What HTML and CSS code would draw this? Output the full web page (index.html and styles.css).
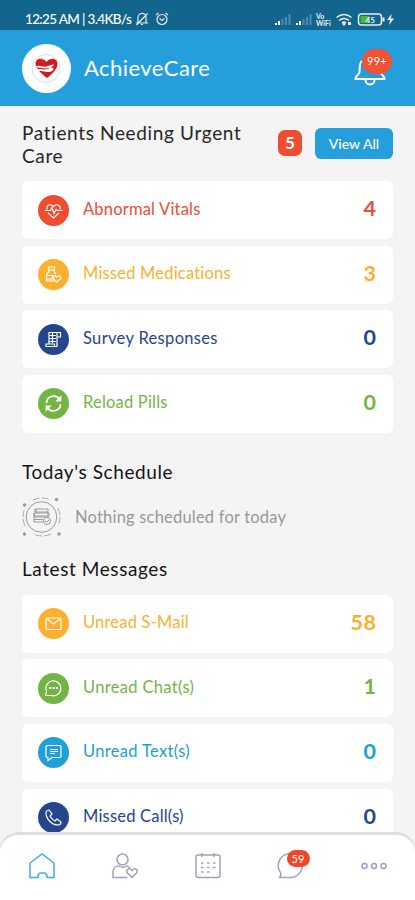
FILE: index.html
```html
<!DOCTYPE html>
<html lang="en">
<head>
<meta charset="utf-8">
<title>AchieveCare</title>
<link rel="stylesheet" href="styles.css">
</head>
<body>
<div class="app">
  <div class="status">
    <span class="clock">12:25 AM | 3.4KB/s</span>
    <svg class="mute" width="14" height="14" viewBox="0 0 14 14"><path d="M3 10V6a4 4 0 0 1 8-1v5l1 1H2zM6 12.5h2M1.5 13L12.5 1.500"/></svg>
    <svg class="alarm" width="14" height="14" viewBox="0 0 14 14"><circle cx="7" cy="7.500" r="5"/><path d="M4.500 6.500L7 8.500l2.500-2M1 3l2.500-2M13 3l-2.500-2"/></svg>
    <svg class="system" width="122" height="18" viewBox="0 0 122 18">
      <g class="bars"><path d="M1 13v2M4 11v4"/><path class="dim" d="M7.500 9v6M11 7v8M14.500 4v11"/><path d="M22 13v2M25 11v4"/><path class="dim" d="M28.500 9v6M32 7v8M35.500 4v11"/></g>
      <text x="41" y="8.500">Vo</text><text x="41" y="15.500">WiFi</text>
      <path class="line" d="M61.500 7.500q7.500-6 15 0M64 10.500q5-4 10 0M67 13q2-2 4 0"/><circle cx="69" cy="14" r="1.500"/><path d="M73 12h3v3h-3z"/>
      <rect class="line" x="83.500" y="4" width="23" height="11" rx="3"/><path d="M107.500 7.500h2v4h-2z"/><path class="charge" d="M85.500 6h9v7h-9z"/><text x="90.500" y="12.500" class="level">45</text>
      <path d="M116.500 4l-4.500 6h3l-1 5 5-6.500h-3z"/>
    </svg>
  </div>
  <header class="header">
    <div class="logo"><svg width="48" height="48" viewBox="0 0 48 48"><circle cx="24" cy="24.500" r="14" class="ring"/><path class="heart" d="M25 34C21 31 14 25 13.500 20c0-6 7-7 11-2 4-5 11-4 11 2 0 5-6 11-10.500 14z"/><path class="hand" d="M13.500 22.500c5-2 7 1 11 0l6-2c2 0 1 2-2 3 3 0 3 1 3 2-2 3-6 3-9 2-3 0-4-1-6-1l-1-1c3-1 5 0 7 0 3 0 5-1 5-2-4 2-8 0-12 0z"/></svg></div>
    <h1 class="brand">AchieveCare</h1>
    <div class="bell">
      <svg width="32" height="34" viewBox="0 0 32 34"><path d="M8 7C5 9 6 14 5.500 18c0 3-4 3-4 7h29c0-4-4-4-4-7L26 7M11.500 26c0 6 9 6 9 0"/></svg>
      <span class="alert-count">99+</span>
    </div>
  </header>
  <main class="content">
    <div class="urgent">
      <h2 class="urgent-title">Patients Needing Urgent Care</h2>
      <span class="urgent-count">5</span>
      <button class="view-all">View All</button>
    </div>
    <section class="cards">
      <div class="card red"><span class="disc"><svg width="31" height="31" viewBox="0 0 31 31"><path d="M9 14.500c-1-5 4-6 6.500-3 2.500-3 7.500-2 6.500 3M10 18l5.500 5 5.500-5M6.500 15.500h6l1.500-3 2 6 2-4 1 1h5.500"/></svg></span><span class="label">Abnormal Vitals</span><b class="number">4</b></div>
      <div class="card orange"><span class="disc"><svg width="31" height="31" viewBox="0 0 31 31"><path d="M10.500 8h6v3h-6zM11 11v2l-2.500 2v7H16M16 11v2l2 2M8.500 16.500h6V20h-6z"/><path d="M18.500 23l-3-3c-1-3 1-4 3-2 2-2 5-1 4 2z"/></svg></span><span class="label">Missed Medications</span><b class="number">3</b></div>
      <div class="card navy"><span class="disc"><svg width="31" height="31" viewBox="0 0 31 31"><path d="M11 20V8.500h11.500V13H19v9.500H8V20h8.500v2M19 9v4M11 11.500h7M11 14.500h7M11 17.500h7M14.500 9v10"/></svg></span><span class="label spaced">Survey Responses</span><b class="number">0</b></div>
      <div class="card green"><span class="disc"><svg class="bold" width="31" height="31" viewBox="0 0 31 31"><path d="M8.500 15c0-7 9-9 13-4M22.500 16c0 7-9 9-13 4"/><path class="solid" d="M22.500 9.500v3h-3zM8.500 21.500v-3h3z"/></svg></span><span class="label">Reload Pills</span><b class="number">0</b></div>
    </section>
    <h2 class="schedule-title">Today's Schedule</h2>
    <div class="empty">
      <svg width="40" height="40" viewBox="0 0 40 40"><circle cx="19.500" cy="20" r="15.300"/><path class="orbit" d="M11 3q9-4 18 0M36 11q4 9 0 18M29 37q-9 4-18 0M3 29q-4-9 0-18"/><path d="M13 12h13v3H13zM12 16h15v3H12zM12 20h12M12 16v9h9M14 12v4M26 15v5M12 22.500h9"/><circle class="badge" cx="25" cy="24" r="3.500"/><path d="M23 24l2 1 2-2"/><g class="dots"><circle cx="2.500" cy="8" r="1.700"/><circle cx="34.500" cy="2.500" r="1.700"/><circle cx="2.500" cy="37" r="1.700"/><circle cx="37" cy="37" r="1.700"/></g></svg>
      <span class="empty-text">Nothing scheduled for today</span>
    </div>
    <h2 class="messages-title">Latest Messages</h2>
    <section class="cards">
      <div class="card orange"><span class="disc"><svg width="31" height="31" viewBox="0 0 31 31"><rect x="8" y="10" width="15" height="11.500" rx="1"/><path d="M8.500 10.500l7 5.500 7-5.500"/></svg></span><span class="label">Unread S-Mail</span><b class="number wide">58</b></div>
      <div class="card green"><span class="disc"><svg width="31" height="31" viewBox="0 0 31 31"><path d="M8.500 18.500a7.500 7.500 0 1 1 4.500 4H7.500z"/><path class="solid" d="M11.500 14.500h1v1h-1zM15 14.500h1v1h-1zM18.500 14.500h1v1h-1z"/></svg></span><span class="label spaced">Unread Chat(s)</span><b class="number">1</b></div>
      <div class="card blue"><span class="disc"><svg width="31" height="31" viewBox="0 0 31 31"><path d="M9 8.500h13l1 1v10l-1 1h-8l-4 3v-3H9l-1-1v-10zM12 12.500h8M12 14.500h8M12 16.500h5"/></svg></span><span class="label spaced">Unread Text(s)</span><b class="number">0</b></div>
      <div class="card navy"><span class="disc"><svg width="31" height="31" viewBox="0 0 31 31"><path d="M8 11c0-2 2-3 3-3l3 4-2 2c1 2 3 4 5 5l2-2 4 3c0 2-1 3-3 3C14 23 8 17 8 11z"/></svg></span><span class="label">Missed Call(s)</span><b class="number">0</b></div>
    </section>
  </main>
  <nav class="nav">
    <span class="tab active"><svg width="30" height="30" viewBox="0 0 30 30"><path d="M3 12L15 3l12 9v14.500h-7V24l-2-2h-5l-2 2v2.500H3z"/></svg></span>
    <span class="tab"><svg width="30" height="30" viewBox="0 0 30 30"><circle cx="12.500" cy="8.500" r="5.500"/><path d="M17.500 26.500H3V21c0-4 3-6 6-6 3 2 5 2 8 0l3 2M22 26.500l-5-5c-1-4 3-5 5-2 2-3 6-2 5 2z"/></svg></span>
    <span class="tab"><svg width="30" height="30" viewBox="0 0 30 30"><rect x="3" y="4" width="24" height="22.500" rx="2"/><path d="M9 2v4M21 2v4M8 12h2.500M14 12h2.500M20 12h2.500M8 16.500h2.500M14 16.500h2.500M20 16.500h2.500M8 21h2.500M14 21h2.500"/></svg></span>
    <span class="tab"><svg width="30" height="30" viewBox="0 0 30 30"><path d="M4.500 21.500A12 12 0 1 1 15 26.500H3c2-1 2-3 1.500-5z"/></svg><span class="chat-count">59</span></span>
    <span class="tab"><svg width="30" height="30" viewBox="0 0 30 30"><circle cx="5.500" cy="15" r="2.500"/><circle cx="15" cy="15" r="2.500"/><circle cx="24.500" cy="15" r="2.500"/></svg></span>
  </nav>
</div>
</body>
</html>
```

FILE: styles.css
```css
* { box-sizing: border-box; }
body { margin: 0; font-family: Lato, "Liberation Sans", sans-serif; }
svg { display: block; fill: none; flex: none; }
h1, h2 { margin: 0; font-weight: 400; }
.app { width: 415px; height: 900px; overflow: hidden; background: #f4f4f4; display: flex; flex-direction: column; position: relative; }
.status { height: 30px; flex: none; background: #14658d; display: flex; align-items: center; padding: 7px 0 0 25px; color: #fff; }
.clock { font: 500 13.500px/16px Lato, sans-serif; width: 107px; letter-spacing: -.65px; white-space: nowrap; }
.mute, .alarm { stroke: #e3edf2; stroke-width: 1.2; margin-left: 3px; }
.alarm { margin-left: 6px; }
.system { margin-left: 106px; fill: #e4eff4; }
.system text { font: 700 7px Lato, sans-serif; }
.system .level { font-size: 8px; }
.system .line { fill: none; stroke: #e4eff4; stroke-width: 1.5; }
.bars { stroke: #fff; stroke-width: 2; }
.bars .dim { stroke: #4f8baa; }
.system .charge { fill: #47b83c; }
.header { height: 76px; flex: none; background: #259fdc; display: flex; align-items: center; padding: 0 29px 0 22px; }
.logo { width: 49px; height: 49px; border-radius: 50%; background: #fff; }
.ring { stroke: #dedede; }
.heart { fill: #d7191f; }
.hand { fill: #fff; }
.brand { margin-left: 13px; color: #fff; font-size: 22px; line-height: 28px; letter-spacing: .45px; }
.bell { margin-left: auto; position: relative; width: 32px; height: 34px; margin-top: 5px; }
.bell svg { stroke: #fff; stroke-width: 2; }
.alert-count { position: absolute; left: 8px; top: -5px; width: 30px; height: 25px; border-radius: 13px; background: #f15135; color: #fff; font-size: 11px; line-height: 24px; text-align: center; letter-spacing: .3px; }
.content { padding: 15px 22px 0; }
.urgent { height: 60px; display: flex; align-items: flex-start; }
.urgent-title { width: 256px; padding-right: 30px; font-size: 19px; line-height: 23px; color: #272727; letter-spacing: .65px; }
.urgent-count { width: 24px; height: 26px; margin-top: 9px; border-radius: 7px; background: #ef4c31; color: #fff; font-size: 17px; font-weight: 700; line-height: 26px; text-align: center; }
.view-all { margin: 7px 0 0 13px; padding: 0; border: 0; width: 78px; height: 31px; border-radius: 6px; background: #259fdc; color: #fff; font: 500 14px/31px Lato, sans-serif; }
.cards { display: grid; grid-auto-rows: 58px; row-gap: 6.600px; }
.card { background: #fff; border-radius: 6px; display: flex; align-items: center; padding: 0 17px 0 16px; }
.disc { width: 31px; height: 31px; border-radius: 50%; background: currentColor; }
.disc svg { stroke: #fff; stroke-width: 1.2; }
.disc .bold { stroke-width: 1.8; }
.disc .solid { fill: #fff; }
.label { margin: -3px 0 0 14px; font-size: 16.500px; letter-spacing: .2px; white-space: nowrap; }
.label.spaced { letter-spacing: .33px; }
.number { margin: -4px 0 0 auto; font-size: 21.500px; font-weight: 700; }
.number.wide { letter-spacing: .6px; margin-right: -.6px; }
.red { color: #ef4c31; }
.orange { color: #fcb02e; }
.navy { color: #25468f; }
.green { color: #72b545; }
.blue { color: #209fd9; }
.schedule-title, .messages-title { font-size: 19px; line-height: 24px; color: #151515; letter-spacing: .58px; }
.schedule-title { margin-top: 27px; }
.empty { height: 40px; margin-top: 13px; display: flex; align-items: center; color: #999; }
.empty svg { stroke: #999; stroke-width: 1; }
.empty .orbit { stroke-dasharray: 7 2; stroke: #aaa; }
.empty .badge { fill: #f4f4f4; }
.empty .dots { fill: #999; stroke: none; }
.empty-text { margin-left: 13px; font-size: 16.500px; letter-spacing: .2px; white-space: nowrap; }
.messages-title { margin: 20px 0 14px; }
.nav { position: absolute; left: -1px; right: -1px; bottom: 0; height: 68px; background: #fff; border: 3px solid #dfdfdf; border-width: 3px 1px 0; border-radius: 20px 20px 0 0; display: grid; grid-template-columns: repeat(5, 1fr); padding-top: 16px; }
.tab { position: relative; justify-self: center; width: 30px; height: 30px; }
.tab svg { stroke: #9da2bf; stroke-width: 1.5; }
.active svg { stroke: #42ace0; }
.chat-count { position: absolute; left: 11px; top: -1px; width: 23px; height: 17px; border-radius: 9px; background: #ef4829; color: #fff; font-size: 11px; line-height: 17px; text-align: center; }
```
